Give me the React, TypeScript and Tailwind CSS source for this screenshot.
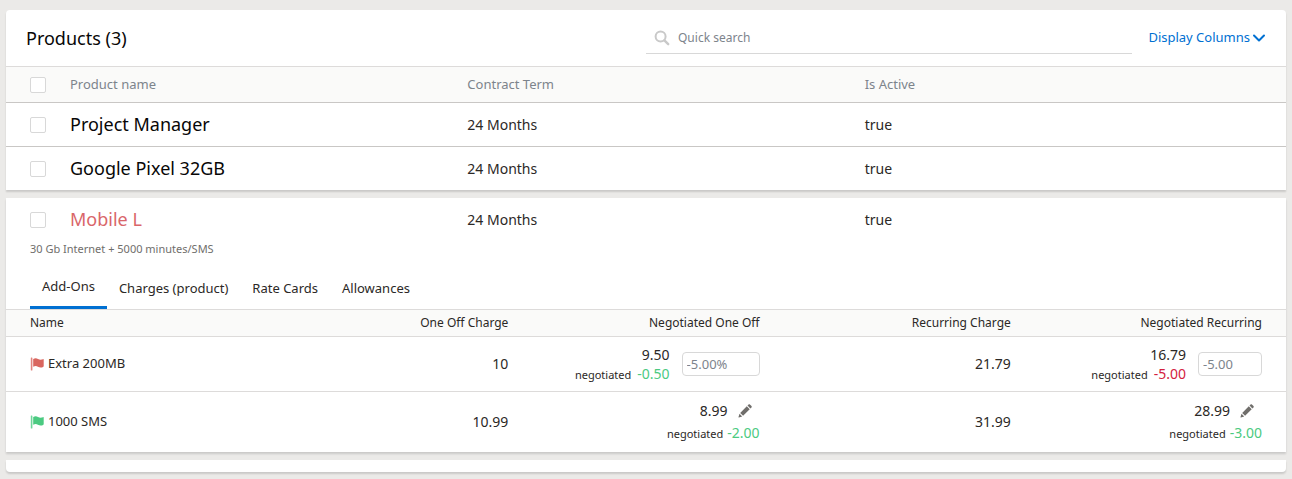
import { useState } from "react";
import type { ReactNode } from "react";

type Product = { id: string; name: string; term: string; active: string; highlighted?: boolean };

const products: Product[] = [
  { id: "pm", name: "Project Manager", term: "24 Months", active: "true" },
  { id: "pixel", name: "Google Pixel 32GB", term: "24 Months", active: "true" },
];

const tabs = ["Add-Ons", "Charges (product)", "Rate Cards", "Allowances"];

const card = "bg-white shadow-[0_2px_2px_rgba(0,0,0,0.14)]";
const productGrid = "grid grid-cols-[40px_1fr_1fr_1fr] items-center px-6";
const addOnGrid = "grid grid-cols-5 items-center pr-6";

function SearchIcon() {
  return (
    <svg viewBox="0 0 16 16" className="size-4 shrink-0 text-[#c9c9c9]" fill="none" stroke="currentColor" aria-hidden="true">
      <circle cx="6.6" cy="6.6" r="5" strokeWidth="2" />
      <path d="M10.400 10.400 14.200 14.200" strokeWidth="2.4" strokeLinecap="round" />
    </svg>
  );
}

function ChevronIcon() {
  return (
    <svg viewBox="0 0 14 14" className="size-3.5" fill="none" stroke="currentColor" strokeWidth="2" strokeLinecap="round" strokeLinejoin="round" aria-hidden="true">
      <path d="M2 4.5 7 9.5 12 4.5" />
    </svg>
  );
}

function FlagIcon({ className }: { className: string }) {
  return (
    <svg viewBox="0 0 14 14" className={`size-3.5 shrink-0 ${className}`} fill="currentColor" aria-hidden="true">
      <rect x="0.8" y="0.4" width="1.6" height="13.2" rx="0.6" opacity="0.8" />
      <path d="M3.200 2.100C5 .9 6.600 1.200 8 2c1.700.9 3.300.9 5 .2.4-.2.7 0 .7.4v6.500c0 .4-.2.6-.6.8-1.800.7-3.500.7-5.200-.2-1.500-.8-2.900-.8-4.700.1z" />
    </svg>
  );
}

function PencilIcon() {
  return (
    <svg viewBox="0 0 14 14" className="size-3.5" fill="currentColor" aria-hidden="true">
      <path d="M2.200 8.900 8.800 2.300 11.700 5.200 5.100 11.800zM9.500 1.600 10.600.500c.4-.4.9-.4 1.300 0l1.600 1.600c.4.400.4.900 0 1.300L12.400 4.500zM1.500 9.800 4.200 12.500.9 13.500c-.3.100-.5-.1-.4-.4z" />
    </svg>
  );
}

function CheckBox({ label }: { label: string }) {
  return (
    <input
      type="checkbox"
      aria-label={label}
      className="block size-4 appearance-none rounded-xs border border-[#d8d8d8] bg-white checked:bg-[#0070d2]"
    />
  );
}

function ProductRow({ product, divided }: { product: Product; divided: boolean }) {
  return (
    <tr className={`${productGrid} ${divided ? "h-11 border-b border-[#c9c7c5]" : "h-[43px]"}`}>
      <td>
        <CheckBox label={`Select ${product.name}`} />
      </td>
      <td className={`pb-0.5 text-lg ${product.highlighted ? "text-[#d9666a]" : "text-[#080707]"}`}>{product.name}</td>
      <td className="text-sm">{product.term}</td>
      <td className="text-sm">{product.active}</td>
    </tr>
  );
}

function Delta({ value, color, gap }: { value: string; color: string; gap: string }) {
  return (
    <div className={`flex items-baseline justify-end ${gap}`}>
      <span className="text-[11px]">negotiated</span>
      <span className={color}>{value}</span>
    </div>
  );
}

function EditingPrice({ price, delta, color, field, value, width }: { price: string; delta: string; color: string; field: string; value: string; width: string }) {
  return (
    <div className="flex items-center justify-end gap-3">
      <div className="text-sm leading-[19px]">
        <div>{price}</div>
        <Delta value={delta} color={color} gap="gap-1.5" />
      </div>
      <input
        type="text"
        aria-label={field}
        defaultValue={value}
        className={`h-6 rounded border border-[#d8d8d8] bg-white px-1 text-[13px] text-[#7d848c] ${width}`}
      />
    </div>
  );
}

function PriceWithEdit({ price, delta, field }: { price: string; delta: string; field: string }) {
  return (
    <div className="text-sm leading-[22px]">
      <div className="flex items-center justify-end gap-2.5 pr-2">
        <span>{price}</span>
        <button type="button" aria-label={`Edit ${field}`} className="text-[#706e6b]">
          <PencilIcon />
        </button>
      </div>
      <Delta value={delta} color="text-[#4bca81]" gap="gap-1" />
    </div>
  );
}

function AddOnRow({ height, flag, name, oneOff, negotiatedOneOff, recurring, negotiatedRecurring }: { height: string; flag: string; name: string; oneOff: string; negotiatedOneOff: ReactNode; recurring: string; negotiatedRecurring: ReactNode }) {
  return (
    <tr className={`${addOnGrid} ${height}`}>
      <td className="flex items-center gap-1 pl-6">
        <FlagIcon className={flag} />
        {name}
      </td>
      <td className="text-right text-sm">{oneOff}</td>
      <td className="text-right">{negotiatedOneOff}</td>
      <td className="text-right text-sm">{recurring}</td>
      <td className="text-right">{negotiatedRecurring}</td>
    </tr>
  );
}

export default function App() {
  const [activeTab, setActiveTab] = useState(tabs[0]);

  return (
    <main className="flex min-h-screen flex-col gap-2 bg-[#ebeae8] px-1.5 pt-2.5 font-['Noto_Sans',sans-serif] text-[13px] text-[#2b2826]">
      <section className={`rounded-t ${card}`}>
        <header className="grid h-14 grid-cols-2 items-center">
          <h1 className="pl-5 text-lg text-[#080707]">Products (3)</h1>
          <div className="flex items-center gap-4 pr-5">
            <label className="flex h-8 flex-1 items-center gap-2 border-b border-[#d8d8d8] pl-2">
              <SearchIcon />
              <input
                type="text"
                aria-label="Quick search"
                placeholder="Quick search"
                className="w-full bg-transparent text-xs outline-none placeholder:text-[#7d848c]"
              />
            </label>
            <button type="button" className="flex items-center gap-0.5 text-[#0070d2]">
              Display Columns
              <ChevronIcon />
            </button>
          </div>
        </header>
        <table className="block">
          <thead className="block">
            <tr className={`${productGrid} h-[37px] border-y border-t-[#dddbda] border-b-[#c9c7c5] bg-[#fafaf9] text-left text-[#7d848c]`}>
              <th className="font-normal">
                <CheckBox label="Select all products" />
              </th>
              <th className="font-normal">Product name</th>
              <th className="font-normal">Contract Term</th>
              <th className="font-normal">Is Active</th>
            </tr>
          </thead>
          <tbody className="block">
            {products.map((product, index) => (
              <ProductRow key={product.id} product={product} divided={index < products.length - 1} />
            ))}
          </tbody>
        </table>
      </section>

      <section className={card}>
        <table className="block">
          <tbody className="block">
            <ProductRow
              product={{ id: "mobile", name: "Mobile L", term: "24 Months", active: "true", highlighted: true }}
              divided={false}
            />
          </tbody>
        </table>
        <p className="px-6 text-[11px] leading-4 text-[#706e6b]">30 Gb Internet + 5000 minutes/SMS</p>
        <div role="tablist" className="mt-[11px] flex h-[41px] px-6">
          {tabs.map((tab) => (
            <button
              key={tab}
              type="button"
              role="tab"
              aria-selected={tab === activeTab}
              onClick={() => setActiveTab(tab)}
              className={`px-3 ${tab === activeTab ? "border-b-3 border-[#0070d2]" : ""}`}
            >
              {tab}
            </button>
          ))}
        </div>
        <table className="block">
          <thead className="block">
            <tr className={`${addOnGrid} h-7 border-y border-[#dddbda] bg-[#fafaf9] text-right text-xs`}>
              <th className="pl-6 text-left font-normal">Name</th>
              <th className="font-normal">One Off Charge</th>
              <th className="font-normal">Negotiated One Off</th>
              <th className="font-normal">Recurring Charge</th>
              <th className="font-normal">Negotiated Recurring</th>
            </tr>
          </thead>
          <tbody className="block">
            <AddOnRow
              height="h-[55px] border-b border-[#dddbda]"
              flag="text-[#d9665f]"
              name="Extra 200MB"
              oneOff="10"
              negotiatedOneOff={
                <EditingPrice price="9.50" delta="-0.50" color="text-[#4bca81]" field="One off discount" value="-5.00%" width="w-[78px]" />
              }
              recurring="21.79"
              negotiatedRecurring={
                <EditingPrice price="16.79" delta="-5.00" color="text-[#d4213d]" field="Recurring discount" value="-5.00" width="w-16" />
              }
            />
            <AddOnRow
              height="h-[60px]"
              flag="text-[#4bca81]"
              name="1000 SMS"
              oneOff="10.99"
              negotiatedOneOff={<PriceWithEdit price="8.99" delta="-2.00" field="one off charge" />}
              recurring="31.99"
              negotiatedRecurring={<PriceWithEdit price="28.99" delta="-3.00" field="recurring charge" />}
            />
          </tbody>
        </table>
      </section>

      <div className={`h-3 rounded-b ${card}`} />
    </main>
  );
}
